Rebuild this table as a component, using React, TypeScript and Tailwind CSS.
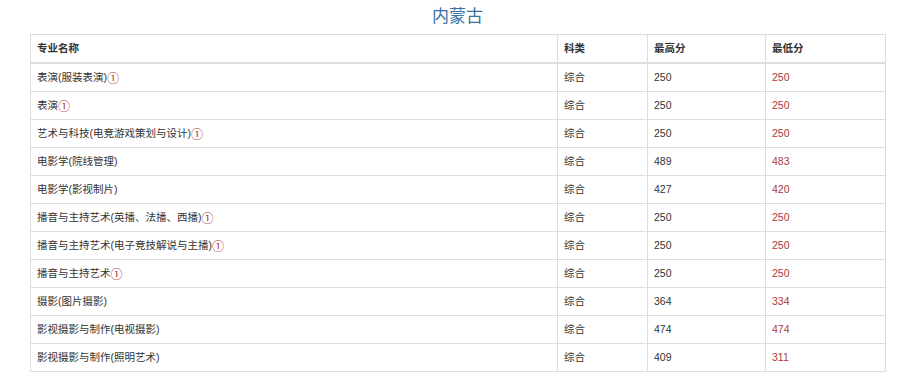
const rows: { name: string; mark?: boolean; type: string; high: string; low: string }[] = [
  { name: '表演(服装表演)', mark: true, type: '综合', high: '250', low: '250' },
  { name: '表演', mark: true, type: '综合', high: '250', low: '250' },
  { name: '艺术与科技(电竞游戏策划与设计)', mark: true, type: '综合', high: '250', low: '250' },
  { name: '电影学(院线管理)', type: '综合', high: '489', low: '483' },
  { name: '电影学(影视制片)', type: '综合', high: '427', low: '420' },
  { name: '播音与主持艺术(英播、法播、西播)', mark: true, type: '综合', high: '250', low: '250' },
  { name: '播音与主持艺术(电子竞技解说与主播)', mark: true, type: '综合', high: '250', low: '250' },
  { name: '播音与主持艺术', mark: true, type: '综合', high: '250', low: '250' },
  { name: '摄影(图片摄影)', type: '综合', high: '364', low: '334' },
  { name: '影视摄影与制作(电视摄影)', type: '综合', high: '474', low: '474' },
  { name: '影视摄影与制作(照明艺术)', type: '综合', high: '409', low: '311' },
]

function Cell({ children, className = '' }: { children: React.ReactNode; className?: string }) {
  return (
    <td className={`border border-[#ddd] px-[6px] py-[5px] ${className}`}>
      <div className="flex h-[17px] items-center overflow-hidden leading-[17px] whitespace-nowrap">{children}</div>
    </td>
  )
}

export default function App() {
  return (
    <div className="min-h-[386px] bg-white pl-[30px] font-['Liberation_Sans','Noto_Sans_CJK_SC',sans-serif] text-[10.5px] text-[#333]">
      <h2 className="h-[34px] w-[855px] pt-[5px] text-center text-[17px] leading-[24px] font-normal text-[#3a73a3]">
        内蒙古
      </h2>
      <table className="w-[855px] table-fixed border-collapse border border-[#ddd]">
        <colgroup>
          <col className="w-[527px]" />
          <col className="w-[90px]" />
          <col className="w-[118px]" />
          <col className="w-[120px]" />
        </colgroup>
        <thead>
          <tr className="text-left font-bold">
            <th className="border border-b-2 border-[#ddd] px-[6px] py-[5px] leading-[17px]">专业名称</th>
            <th className="border border-b-2 border-[#ddd] px-[6px] py-[5px] leading-[17px]">科类</th>
            <th className="border border-b-2 border-[#ddd] px-[6px] py-[5px] leading-[17px]">最高分</th>
            <th className="border border-b-2 border-[#ddd] px-[6px] py-[5px] leading-[17px]">最低分</th>
          </tr>
        </thead>
        <tbody>
          {rows.map((r) => (
            <tr key={r.name}>
              <Cell>
                <span>{r.name}</span>
                {r.mark && (
                  <span className="font-['Noto_Sans_CJK_SC',sans-serif] text-[12px] leading-none text-[#a83a3e]">①</span>
                )}
              </Cell>
              <Cell>{r.type}</Cell>
              <Cell>{r.high}</Cell>
              <Cell className="text-[#a83a3e]">{r.low}</Cell>
            </tr>
          ))}
        </tbody>
      </table>
    </div>
  )
}
